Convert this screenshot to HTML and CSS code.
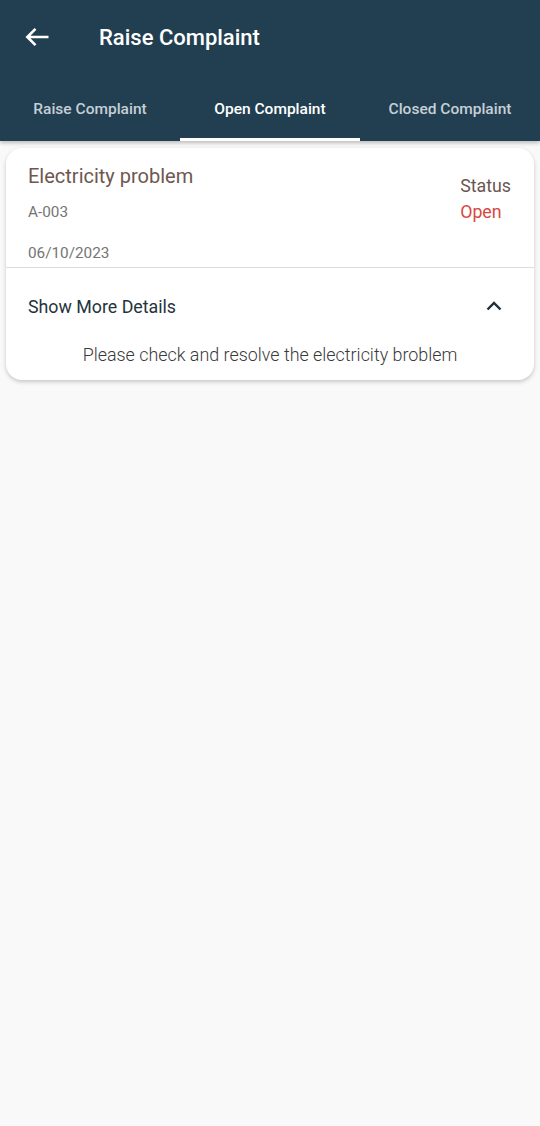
FILE: index.html
```html
<!DOCTYPE html>
<html>
  <head>
    <title>Raise Complaint</title>
    <meta charset="UTF-8">
    <link rel="stylesheet" href="styles.css">
  </head>
  <body>
    <div class="appbar">
      <div class="toolbar">
        <svg class="back" width="26" height="20" viewBox="0 0 26 20">
          <path d="M24.5 10H3.5M11.5 1.8L3.3 10l8.2 8.2" fill="none" stroke="#fff" stroke-width="2.6"/>
        </svg>
        <div class="title">Raise Complaint</div>
      </div>
      <div class="tabs">
        <div class="tab">Raise Complaint</div>
        <div class="tab active">Open Complaint</div>
        <div class="tab">Closed Complaint</div>
      </div>
    </div>

    <div class="list">
      <div class="card">
        <div class="head">
          <div class="info">
            <div class="name">Electricity problem</div>
            <div class="code">A-003</div>
            <div class="date">06/10/2023</div>
          </div>
          <div class="status">
            <div class="label">Status</div>
            <div class="value">Open</div>
          </div>
        </div>
        <div class="more">
          <span>Show More Details</span>
          <svg width="24" height="24" viewBox="0 0 24 24">
            <path d="M5.5 15.5L12 9l6.5 6.5" fill="none" stroke="#1f2f38" stroke-width="2.4"/>
          </svg>
        </div>
        <div class="desc">Please check and resolve the electricity broblem</div>
      </div>
    </div>
  </body>
</html>
```

FILE: styles.css
```css
html, body {
  height: 100%;
}
body {
  margin: 0;
  font-family: Roboto, 'Noto Sans', sans-serif;
  background: #f9f9f9;
}
.appbar {
  background: #223f52;
  box-shadow: 0 2px 4px rgba(0,0,0,0.25);
  position: relative;
  z-index: 1;
}
.toolbar {
  height: 74px;
  display: flex;
  align-items: center;
  padding-left: 24px;
  box-sizing: border-box;
}
.back {
  width: 26px;
  height: 20px;
}
.title {
  margin-left: 49px;
  color: #fff;
  font-size: 22px;
  font-weight: 500;
}
.tabs {
  display: flex;
  height: 67px;
}
.tab {
  flex: 1;
  display: flex;
  align-items: center;
  justify-content: center;
  color: #c5cfd6;
  font-size: 15.5px;
  font-weight: 500;
  box-sizing: border-box;
  border-bottom: 3px solid transparent;
  padding-top: 5px;
}
.tab.active {
  color: #fff;
  border-bottom-color: #fff;
}
.list {
  padding: 7px 6px;
}
.card {
  background: #fff;
  border-radius: 16px;
  box-shadow: 0 2px 4px rgba(0,0,0,0.2);
  overflow: hidden;
}
.head {
  display: flex;
  justify-content: space-between;
  padding: 15px 23px 0 22px;
  border-bottom: 1px solid #dcdcdc;
}
.name {
  color: #6e5750;
  font-size: 20px;
  line-height: 26px;
}
.code {
  color: #757575;
  font-size: 15.3px;
  margin-top: 13px;
  line-height: 20px;
}
.date {
  color: #757575;
  font-size: 15.3px;
  margin-top: 21px;
  line-height: 20px;
  padding-bottom: 4px;
}
.status {
  padding-top: 10px;
}
.status .label {
  color: #6a5651;
  font-size: 17.8px;
  line-height: 26px;
}
.status .value {
  color: #d9473f;
  font-size: 17.8px;
  line-height: 26px;
}
.more {
  display: flex;
  justify-content: space-between;
  align-items: center;
  padding: 26px 28px 0 22px;
  color: #24343d;
  font-size: 17.8px;
}
.desc {
  text-align: center;
  color: #3a3a3a;
  font-size: 17.9px;
  font-weight: 300;
  line-height: 20px;
  padding: 27px 0 15px;
}
```
